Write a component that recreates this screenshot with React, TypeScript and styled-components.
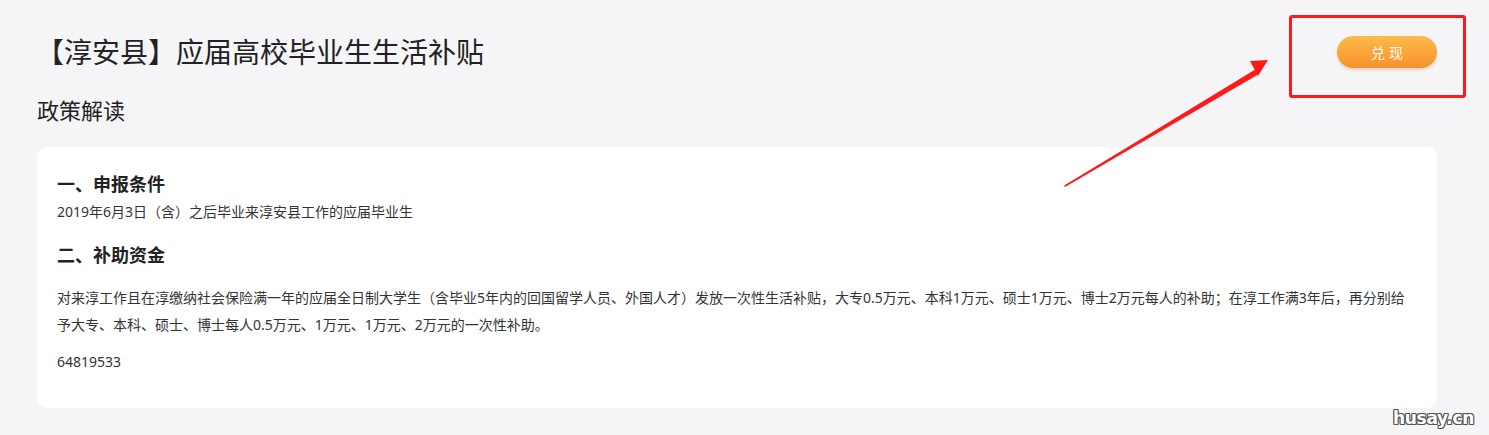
import React from "react";
import styled, { createGlobalStyle } from "styled-components";

const GlobalStyle = createGlobalStyle`
  html, body {
    margin: 0;
    padding: 0;
    background: #f5f5f7;
  }
  body {
    font-family: "Noto Sans", "Noto Sans CJK SC", sans-serif;
    color: #333;
  }
`;

const Page = styled.div`
  position: relative;
  width: 1489px;
  height: 435px;
  box-sizing: border-box;
  padding: 32px 52px 0 37px;
  background: #f5f5f7;
  overflow: hidden;
`;

const Header = styled.div`
  display: flex;
  align-items: center;
  justify-content: space-between;
  height: 40px;
`;

const Title = styled.h1`
  margin: 0 0 0 -1px;
  font-size: 28px;
  line-height: 40px;
  font-weight: 400;
  color: #222;
  letter-spacing: 0;
`;

const ButtonWrap = styled.div`
  position: relative;
  display: flex;
  align-items: center;
`;

const CashButton = styled.button`
  width: 100px;
  height: 32px;
  border: none;
  border-radius: 16px;
  background: linear-gradient(180deg, #fcbb4a 0%, #f7912b 100%);
  box-shadow: 0 2px 3px rgba(200, 120, 40, 0.25);
  color: #fff;
  font-family: "Noto Sans CJK SC", sans-serif;
  font-size: 14px;
  letter-spacing: 4px;
  padding: 0 0 0 4px;
  cursor: pointer;
`;

const Highlight = styled.div`
  position: absolute;
  left: -48px;
  top: -21px;
  width: 171px;
  height: 77px;
  border: 3px solid #ff1a1a;
  border-radius: 3px;
  pointer-events: none;
`;

const SubTitle = styled.h2`
  margin: 23px 0 0 0;
  font-size: 22px;
  line-height: 30px;
  font-weight: 400;
  color: #222;
`;

const Card = styled.div`
  margin-top: 22px;
  background: #fff;
  border-radius: 10px;
  padding: 24px 20px 33px 20px;
`;

const SectionTitle = styled.h3<{ $gap?: number }>`
  margin: ${(p) => p.$gap ?? 0}px 0 0 0;
  font-size: 18px;
  line-height: 26px;
  font-weight: 700;
  color: #222;
`;

const Text = styled.p<{ $gap?: number; $lh?: number }>`
  margin: ${(p) => p.$gap ?? 0}px 0 0 0;
  font-size: 14px;
  line-height: ${(p) => p.$lh ?? 22}px;
  color: #333;
`;

const Arrow = styled.svg`
  position: absolute;
  left: 1060px;
  top: 55px;
  pointer-events: none;
`;

const Watermark = styled.div`
  position: absolute;
  right: 15px;
  bottom: 7px;
  font-family: "DejaVu Sans", sans-serif;
  font-weight: 700;
  font-size: 17px;
  letter-spacing: -0.3px;
  color: #fff;
  text-shadow:
    1px 0 0 #555, -1px 0 0 #555, 0 1px 0 #555, 0 -1px 0 #555,
    1px 1px 0 #555, -1px -1px 0 #555, 1px -1px 0 #555, -1px 1px 0 #555;
`;

export default function App() {
  return (
    <>
      <GlobalStyle />
      <Page>
        <Header>
          <Title>【淳安县】应届高校毕业生生活补贴</Title>
          <ButtonWrap>
            <CashButton>兑现</CashButton>
            <Highlight />
          </ButtonWrap>
        </Header>
        <SubTitle>政策解读</SubTitle>
        <Card>
          <SectionTitle>一、申报条件</SectionTitle>
          <Text $gap={4}>2019年6月3日（含）之后毕业来淳安县工作的应届毕业生</Text>
          <SectionTitle $gap={19}>二、补助资金</SectionTitle>
          <Text $gap={16} $lh={27}>
            对来淳工作且在淳缴纳社会保险满一年的应届全日制大学生（含毕业5年内的回国留学人员、外国人才）发放一次性生活补贴，大专0.5万元、本科1万元、硕士1万元、博士2万元每人的补助；在淳工作满3年后，再分别给予大专、本科、硕士、博士每人0.5万元、1万元、1万元、2万元的一次性补助。
          </Text>
          <Text $gap={10} $lh={27}>64819533</Text>
        </Card>
        <Arrow width="220" height="140" viewBox="0 0 220 140">
          <polygon points="5,130 193,17 190,21 6,131" fill="#ff1a1a" />
          <polygon points="4,131 196,14 199,19 5,132" fill="#ff1a1a" />
          <polygon points="208,5 190,6 198,21" fill="#ff1a1a" />
        </Arrow>
        <Watermark>husay.cn</Watermark>
      </Page>
    </>
  );
}
